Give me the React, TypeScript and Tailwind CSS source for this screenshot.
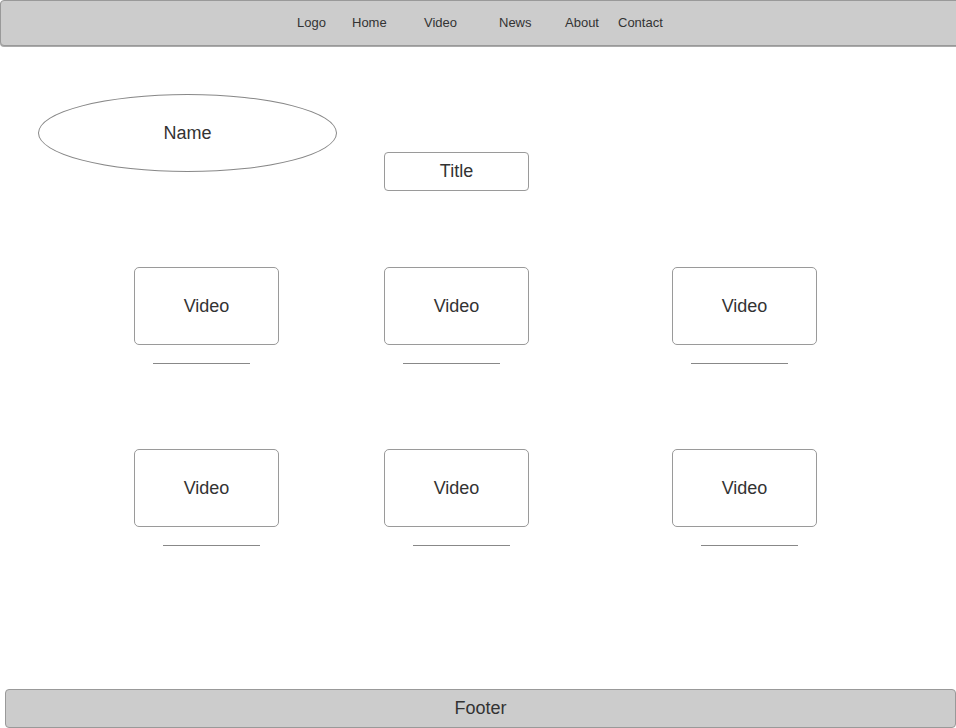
import React from 'react';

const navItems = [
  { label: 'Logo', w: 'w-[55px]' },
  { label: 'Home', w: 'w-[72px]' },
  { label: 'Video', w: 'w-[75px]' },
  { label: 'News', w: 'w-[66px]' },
  { label: 'About', w: 'w-[53px]' },
  { label: 'Contact', w: 'w-[60px]' },
];

const VideoCard: React.FC<{ lineOffset: string; lineGap: string }> = ({ lineOffset, lineGap }) => (
  <div className="flex flex-col w-[145px]">
    <div className="h-[78px] w-[145px] border border-[#9a9a9a] rounded-[5px] flex items-center justify-center text-[18px] text-[#333]">
      Video
    </div>
    <div className={`h-px w-[97px] bg-[#888] ${lineOffset} ${lineGap}`}></div>
  </div>
);

const App: React.FC = () => {
  return (
    <div className="h-screen w-full bg-white flex flex-col overflow-hidden" style={{ fontFamily: '"Liberation Sans", Arial, sans-serif' }}>
      {/* Header */}
      <div className="h-[46px] w-[970px] shrink-0 bg-[#cccccc] border border-[#999] rounded-[4px] shadow-[0_1px_0_#aaa] flex items-center pl-[296px] pb-[1px]">
        {navItems.map((item) => (
          <span key={item.label} className={`${item.w} text-[13px] text-[#333]`}>
            {item.label}
          </span>
        ))}
      </div>

      {/* Name + Title */}
      <div className="flex mt-[48px]">
        <div className="ml-[38px] w-[299px] h-[78px] border border-[#888] rounded-[50%] flex items-center justify-center text-[18px] text-[#333]">
          Name
        </div>
        <div className="ml-[47px] mt-[58px] w-[145px] h-[39px] border border-[#9a9a9a] rounded-[4px] flex items-center justify-center text-[18px] text-[#333]">
          Title
        </div>
      </div>

      {/* Video row 1 */}
      <div className="flex mt-[76px] pl-[134px]">
        <VideoCard lineOffset="ml-[19px]" lineGap="mt-[18px]" />
        <div className="w-[105px]"></div>
        <VideoCard lineOffset="ml-[19px]" lineGap="mt-[18px]" />
        <div className="w-[143px]"></div>
        <VideoCard lineOffset="ml-[19px]" lineGap="mt-[18px]" />
      </div>

      {/* Video row 2 */}
      <div className="flex mt-[85px] pl-[134px]">
        <VideoCard lineOffset="ml-[29px]" lineGap="mt-[18px]" />
        <div className="w-[105px]"></div>
        <VideoCard lineOffset="ml-[29px]" lineGap="mt-[18px]" />
        <div className="w-[143px]"></div>
        <VideoCard lineOffset="ml-[29px]" lineGap="mt-[18px]" />
      </div>

      {/* Footer */}
      <div className="mt-auto ml-[5px] w-[951px] h-[39px] shrink-0 bg-[#cccccc] border border-[#999] rounded-[4px] flex items-center justify-center text-[18px] text-[#333]">
        Footer
      </div>
    </div>
  );
};

export default App;
